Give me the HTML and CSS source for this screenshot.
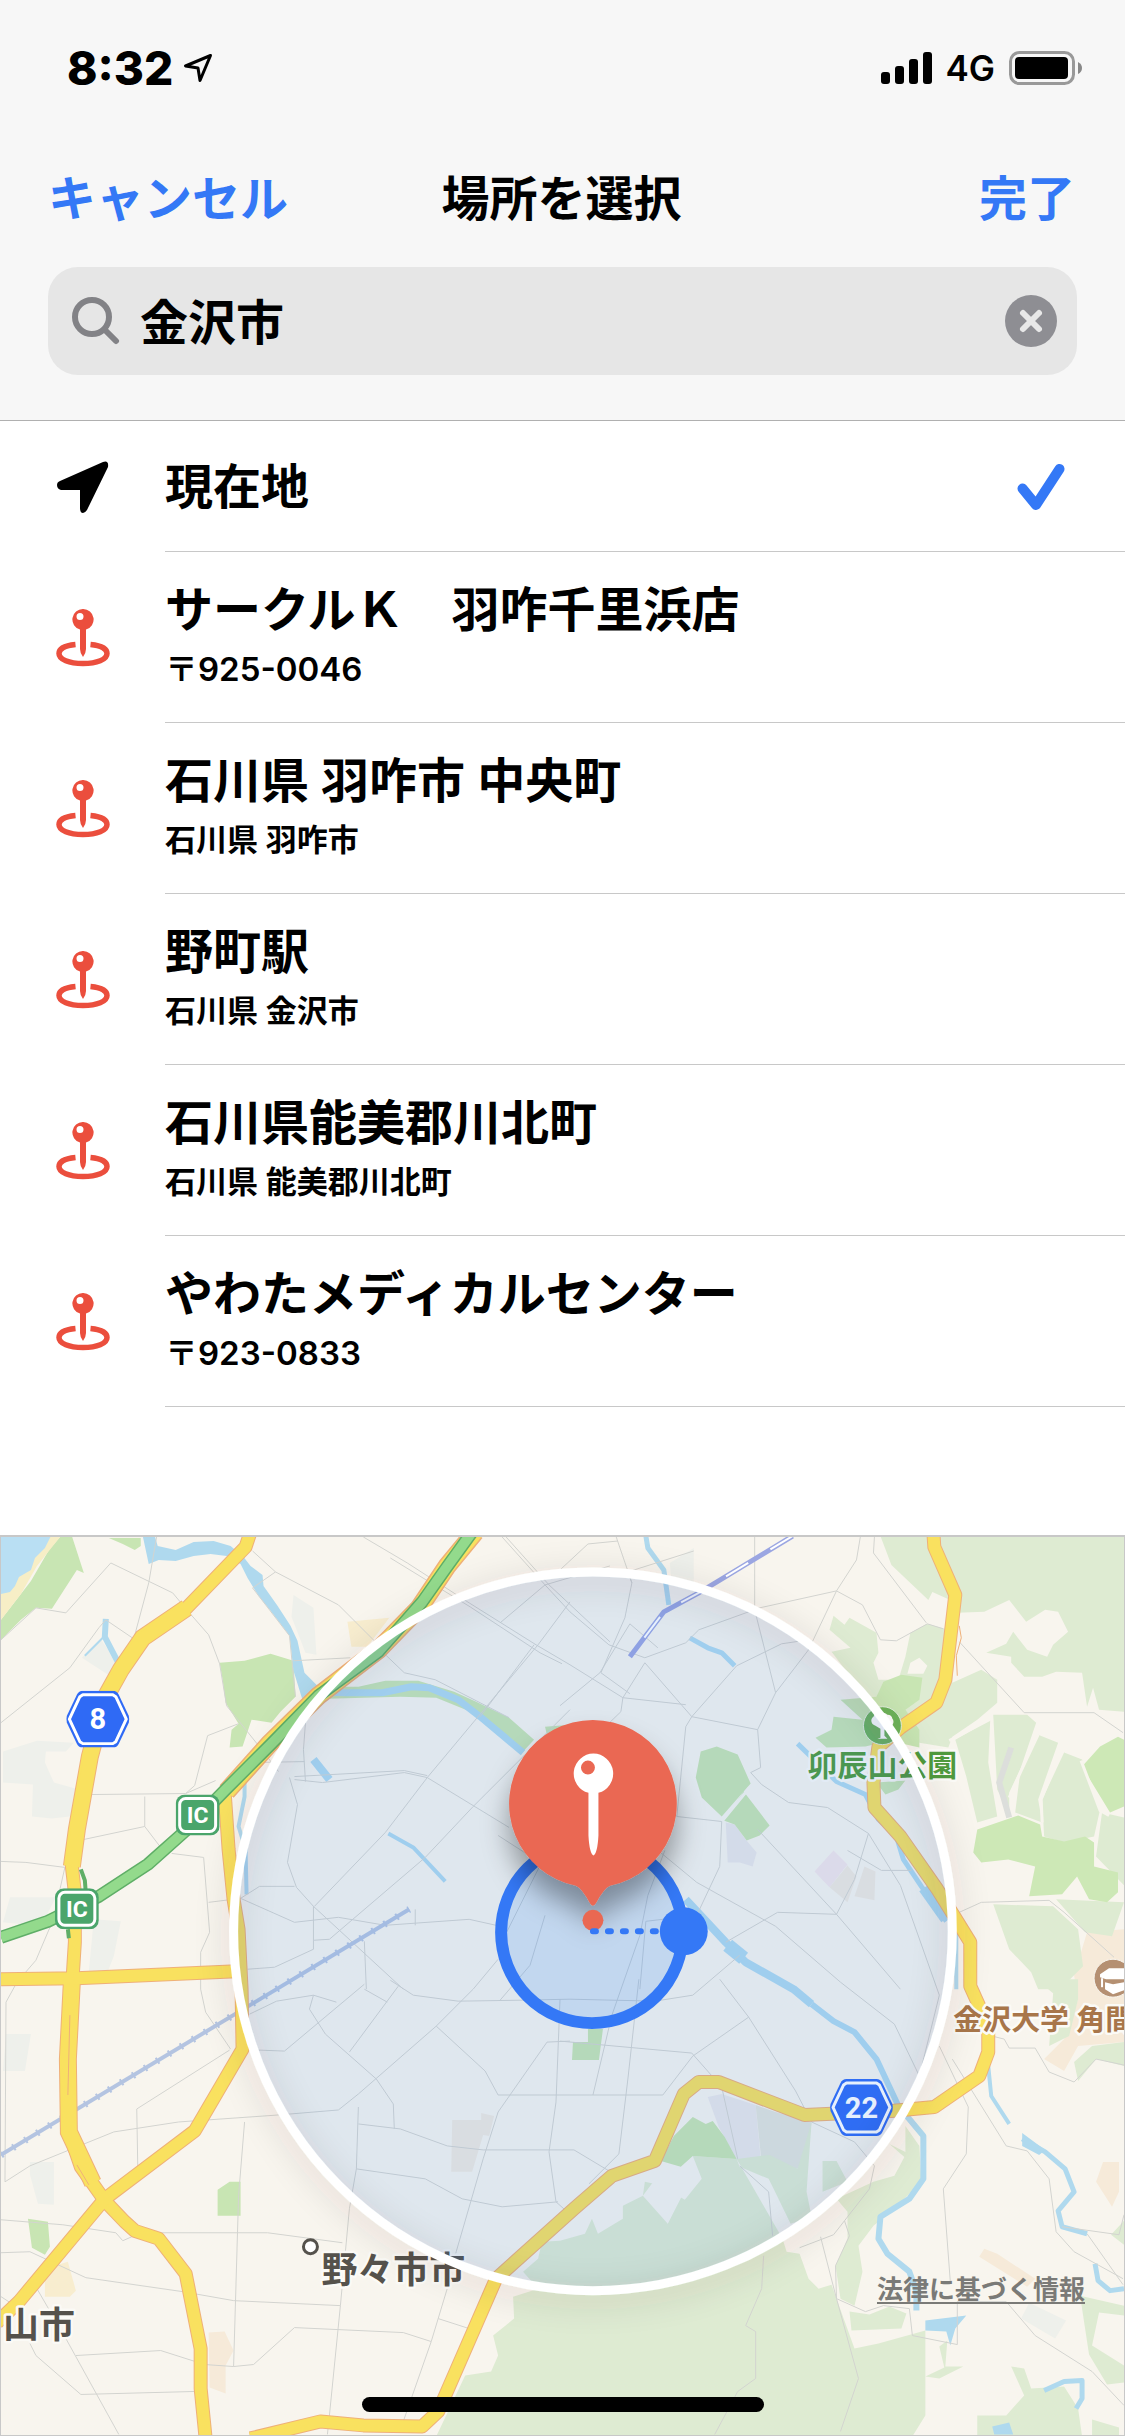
FILE: index.html
```html
<!DOCTYPE html>
<html lang="ja">
<head>
    <meta charset="UTF-8">
    <meta name="viewport" content="width=device-width, initial-scale=1.0">
    <title>場所を選択</title>
    <link rel="stylesheet" href="styles.css">
</head>
<body>
    <!-- shared icons -->
    <svg class="sprite" aria-hidden="true">
        <symbol id="pin" viewBox="0 0 54 58">
            <path fill="currentColor" fill-rule="evenodd" d="M27 0a10.500 10.500 0 0 1 3 20.600V40q0 4-3 8q-3-4-3-8V20.600A10.500 10.500 0 0 1 27 0zM24 4a3.500 3.500 0 1 0 0 7a3.500 3.500 0 0 0 0-7z"/>
            <path fill="none" stroke="currentColor" stroke-width="5.500" d="M19.500 35.500C9 36.500 3 40 3 44.500C3 50.500 13 54.500 27 54.500S51 50.500 51 44.500C51 40 45 36.500 34.500 35.500"/>
        </symbol>
        <symbol id="hexagon" viewBox="0 0 64 57">
            <path fill="#2f6af5" d="M17 0h30q4 0 6 4l10 21q1 3.500 0 7L53 53q-2 4-6 4H17q-4 0-6-4L1 32q-1-3.500 0-7L11 4q2-4 6-4z"/>
            <path fill="none" stroke="#fff" stroke-width="3" stroke-linejoin="round" d="M17 4h30l3 2l10.500 22.500L50 51l-3 2H17l-3-2L3.500 28.500L14 6z"/>
        </symbol>
        <symbol id="interchange" viewBox="0 0 44 41">
            <rect width="44" height="41" rx="9" fill="#4aa56b"/>
            <rect x="4" y="4" width="36" height="33" rx="6" fill="none" stroke="#fff" stroke-width="3"/>
        </symbol>
    </svg>

    <header class="header">
        <div class="status">
            <span class="time">8:32</span>
            <svg class="status-location" viewBox="0 0 30 30" aria-hidden="true"><path d="M27.500 2.500L2.500 13L15 15L17 27.500z" fill="none" stroke="#000" stroke-width="3" stroke-linejoin="round"/></svg>
            <svg class="signal" viewBox="0 0 52 34" aria-hidden="true">
                <rect x="0" y="21" width="9" height="12" rx="3"/>
                <rect x="14" y="15" width="9" height="18" rx="3"/>
                <rect x="28" y="8" width="9" height="25" rx="3"/>
                <rect x="42" y="1" width="9" height="32" rx="3"/>
            </svg>
            <span class="network">4G</span>
            <svg class="battery" viewBox="0 0 74 34" aria-hidden="true">
                <rect x="1.500" y="1.500" width="63" height="31" rx="9" fill="none" stroke="#999" stroke-width="3"/>
                <rect x="6" y="6" width="53" height="22" rx="4"/>
                <path d="M69 11q4 2 4 6t-4 6z" fill="#888"/>
            </svg>
        </div>
        <nav class="nav">
            <button class="nav-button" type="button">キャンセル</button>
            <h1>場所を選択</h1>
            <button class="nav-button nav-done" type="button">完了</button>
        </nav>
        <form class="search">
            <svg class="search-icon" viewBox="0 0 48 48" aria-hidden="true"><circle cx="20" cy="20" r="17"/><path d="M32.500 32.500L44 44"/></svg>
            <input type="text" name="place" value="金沢市" aria-label="場所を検索">
            <button class="clear" type="reset" aria-label="消去">
                <svg viewBox="0 0 52 52" aria-hidden="true"><circle cx="26" cy="26" r="26" fill="#8e8e93"/><path d="M18 18L34 34M34 18L18 34" stroke="#e8e8e8" stroke-width="6" stroke-linecap="round"/></svg>
            </button>
        </form>
    </header>

    <ul class="places">
        <li>
            <button class="place" type="button">
                <svg class="current-icon" viewBox="0 0 52 52" aria-hidden="true"><path d="M46 1Q52-1 51 6L30 49Q28 52 26 52Q23 52 23 47V29H4Q0 28 0 24Q0 21 3 20z"/></svg>
                <span class="place-text current">
                    <span class="name">現在地</span>
                    <svg class="check" viewBox="0 0 48 48" aria-hidden="true"><path d="M5.500 25.500L19 42L42.500 6" fill="none" stroke="#3478f6" stroke-width="10" stroke-linecap="round" stroke-linejoin="round"/></svg>
                </span>
            </button>
        </li>
        <li>
            <button class="place" type="button">
                <svg class="pin-icon" aria-hidden="true"><use href="#pin"/></svg>
                <span class="place-text"><span class="name">サークルＫ　羽咋千里浜店</span><span class="address postal">〒925-0046</span></span>
            </button>
        </li>
        <li>
            <button class="place" type="button">
                <svg class="pin-icon" aria-hidden="true"><use href="#pin"/></svg>
                <span class="place-text"><span class="name">石川県 羽咋市 中央町</span><span class="address">石川県 羽咋市</span></span>
            </button>
        </li>
        <li>
            <button class="place" type="button">
                <svg class="pin-icon" aria-hidden="true"><use href="#pin"/></svg>
                <span class="place-text"><span class="name">野町駅</span><span class="address">石川県 金沢市</span></span>
            </button>
        </li>
        <li>
            <button class="place" type="button">
                <svg class="pin-icon" aria-hidden="true"><use href="#pin"/></svg>
                <span class="place-text"><span class="name">石川県能美郡川北町</span><span class="address">石川県 能美郡川北町</span></span>
            </button>
        </li>
        <li>
            <button class="place" type="button">
                <svg class="pin-icon" aria-hidden="true"><use href="#pin"/></svg>
                <span class="place-text"><span class="name">やわたメディカルセンター</span><span class="address postal">〒923-0833</span></span>
            </button>
        </li>
    </ul>

    <main class="map">
        <svg class="map-canvas" viewBox="0 1 1125 900" preserveAspectRatio="xMidYMid slice">
            <defs>
                <filter id="ringShadow" x="-20%" y="-20%" width="140%" height="140%"><feDropShadow dx="0" dy="6" stdDeviation="16" flood-color="#3c3010" flood-opacity="0.22"/></filter>
                <filter id="pinShadow" x="-50%" y="-50%" width="200%" height="200%"><feDropShadow dx="0" dy="20" stdDeviation="14" flood-opacity="0.36"/></filter>
                <!-- roads drawn twice: casing, then fill -->
                <g id="roads" fill="none" stroke-linejoin="round">
                    <path d="M250-4L245 11L186 72L142 102L120 134L105 161L89 221L76 294L71 331L74 357L74 407L71 454" />
                    <path d="M71 440L67 524L68 597L80 632L104 666L124 687L134 696L158 704L185 739L200 814L200 854L205 904"/>
                    <path d="M224 256L228 314L233 364L238 394L241 454L242 514L194 596L104 664L18 767L-4 788"/>
                    <path d="M0 444L76 443L236 436"/>
                    <path d="M250 904L320 887L363 891L422 892L438 877L496 744L574 674L612 641L655 626L684 559L699 547L719 547L805 580L892 576L935 572L980 541L989 517L989 497L980 471L971 451L971 407L955 381L938 354L901 301L875 272L874 247L879 211L901 192L937 167L946 144L956 59L935 11L934-4"/>
                </g>
            </defs>
            <rect width="1125" height="902" fill="#f8f5ee"/>

            <!-- districts -->
            <g fill="#eef0eb">
                <path d="M293 59L313 72L316 119L305 117L291 81zM2 216L36 205L73 207L65 216L45 216L44 227L53 247L78 254L69 281L51 283L31 281L32 249L2 247zM9 362L55 362L40 391L2 387zM93 384L120 386L113 421L107 436L88 436zM5 499L30 499L24 536L2 536zM29 627L53 627L53 670L37 669L29 640zM81 122L100 104L118 128L112 142zM670 27L694 12L694 52L672 48z"/>
                <path d="M1030 768L1067 786L1056 804L1022 784z"/>
            </g>
            <g fill="#eae8e9">
                <path d="M726 287L735 289L746 304L757 317L753 331L740 327L728 327z"/>
                <path d="M708 562L722 559L756 570L762 634L737 624L719 592z"/>
            </g>
            <path fill="#e2e4dc" d="M756 570L776 577L812 587L808 620L798 634L762 628z"/>
            <path fill="#f3e6ea" d="M834 315L848 329L830 352L815 336z"/>
            <path fill="#f1eae0" d="M848 330L857 341L848 367L830 352zM865 331L876 336L875 365L855 361zM452 585L481 585L481 578L494 581L489 601L483 600L472 637L451 637z"/>
            <path fill="#f8edcf" d="M347 86L389 82L367 111L351 111zM44 734L67 727L75 756L69 762L44 762z"/>
            <path fill="#f6ead9" d="M208 798L224 797L233 816L225 831L225 859L209 853zM1088 397L1125 394V507L1079 511L1065 536L1045 524L1065 504L1079 464L1075 440zM985 714L998 719L1036 744L1028 752L980 722zM1104 627L1120 627L1120 657L1113 672L1097 647z"/>

            <!-- forest -->
            <g fill="#deebd2">
                <path d="M881 0L892 29L929 64L933 56L951 64L958 77L985 76L1010 64L1027 86L1046 74L1059 76L1069 96L1054 109L1048 121L1028 114L1014 96L1007 108L987 117L1012 121L1012 127L1025 141L1043 141L1057 136L1083 137L1088 171L1094 152L1100 174L1125 176V0z"/>
                <path d="M834 80L845 89L850 82L877 97L879 117L874 127L879 144L899 144L906 121L911 97L928 88L949 94L956 104L953 147L982 134L998 144L998 167L978 184L953 201L949 212L920 207L899 194L863 161L848 137L832 116L851 112L830 94z"/>
                <path d="M956 204L991 184L989 227L998 281L978 287L967 241zM994 179L1028 179L1037 187L1021 234L1010 257L1010 277L998 254zM1039 199L1059 207L1039 264L1043 287L1016 277L1021 237zM1065 217L1083 224L1101 274L1095 301L1065 307L1045 301L1043 264z"/>
                <path d="M1103 277L1125 282V350L1097 321zM994 369L1054 371L1079 394L1084 431L1061 454L1039 454L1032 437L1010 414zM1057 364L1125 367L1113 401L1086 397z"/>
                <path d="M1037 444L1079 444L1079 464L1070 501L1050 511L1054 458zM1125 507L1093 511L1075 527L1079 546L1097 524L1125 531z"/>
                <path d="M560 706L585 699L592 684L598 699L623 684L623 671L643 661L645 647L659 650L668 689L675 659L685 665L702 644L693 621L737 624L740 632L769 644L772 650L791 689L812 682L807 657L812 587L798 634L770 620L737 624L783 704L787 717L800 719L809 744L819 754L832 750L837 764L855 814L879 809L926 796L926 881L913 902H436L465 841L491 837L498 821L493 801L514 784L513 762L538 754L523 737L538 724L542 707z"/>
                <path d="M890 609L906 617L906 591L920 611L922 647L895 674L874 691L859 711L863 737L855 771L841 764L836 731L848 704L848 677L837 664L874 647L895 641L905 622zM823 626L837 626L848 647L823 657z"/>
                <path d="M850 777L870 780L890 772L907 779L902 794L852 796zM926 842L945 833L940 812L948 806L946 832L964 832L940 844zM1125 686L1112 700L1125 710zM1081 761L1125 771L1125 781L1100 778L1093 811L1125 831V848L1108 850L1090 820zM1012 832L1025 834L1032 854L1065 852L1079 874L1083 902H978V881L1007 881L1025 861zM1093 885L1120 893V902H1093z"/>
            </g>
            <path fill="#f8f5ee" d="M911 127L920 122L928 130L924 138L908 138zM643 661L668 689L693 640L675 626L655 645z"/>

            <!-- parks -->
            <g fill="#c8e5b3">
                <path d="M60 0H71L83 37L76 34L51 73L35 72L20 84L0 104V84L30 45L48 14zM108 2H140V10L134 14L122 8z"/>
                <path d="M345 151L358 151L385 145L418 145L454 156L476 166L509 182L534 204L523 216L502 197L473 177L436 162L400 161L327 163z"/>
                <path d="M219 127L244 125L270 118L293 125L295 161L280 176L271 187L251 184L242 211L229 212L231 194L238 188L225 167L222 144z"/>
                <path d="M27 684L47 687L49 712L44 720L31 713zM217 655L229 647L240 647L240 681L217 681zM545 191L570 189V204H548zM588 494H603L599 525H572L573 507H588z"/>
                <path d="M701 216L717 211L738 219L751 248L722 281L702 262L696 242zM744 256L770 290L760 300L747 305L735 289L724 285z"/>
                <path d="M884 146L902 139L923 142L920 164L906 174L920 194L920 212L890 205L866 211L827 212L816 202L832 194L834 181L863 184L841 164L865 162L877 161zM877 247L906 245L899 254L886 259z"/>
                <path d="M661 626L674 601L693 582L706 589L713 586L725 602L737 624L693 621L681 632z"/>
            </g>
            <path fill="#cde8b6" d="M978 294L1019 280L1041 289L1043 301L1065 306L1086 301L1095 307L1095 331L1119 337L1119 357L1108 367L1090 364L1078 341L1063 359L1030 361L1036 331L1009 324L982 327L974 317zM1125 204L1119 201L1101 211L1083 231L1111 277L1125 271z"/>
            <path fill="none" stroke="#dcdedb" stroke-width="6" d="M1012 212L1000 247L1010 282"/>
            <path fill="none" stroke="#f8f5ee" stroke-width="3" d="M950 205L992 183M1039 199L1022 235L1010 262M1063 212L1042 264L1043 287M1082 225L1101 275L1110 280M750 252L722 286"/>

            <!-- water -->
            <path fill="#f7eec6" d="M50 0H60L36 30L20 58L0 84V56z"/>
            <path fill="#b9dff3" d="M0 0H50L44 12L34 22L30 34L18 41L14 50L9 56L0 58z"/>
            <path fill="#afd9ee" d="M142 0H154L157 10L175 14L193 6L213 5L230 10L243 21L250 30L262 39L263 50L277 70L290 90L297 105L304 137L318 151L324 162L302 164L293 135L289 100L270 75L258 60L247 42L240 28L226 20L210 18L193 20L175 25L158 24L148 28z"/>
            <g fill="none" stroke="#afd9ee" stroke-linejoin="round">
                <path stroke-width="7" d="M315 156L345 157L382 157L411 151L429 152L458 164L480 181L523 217"/>
                <path stroke-width="6" d="M105 83L104 101L117 126L122 144"/>
                <path stroke-width="2" d="M102 102L84 120"/>
                <path stroke-width="4" d="M244 241V261L238 291L245 314L246 359M388 298L413 312L445 346M957 394V454M989 531L992 561L1010 589"/>
                <path stroke-width="8" d="M313 224L329 244M686 364L726 407L746 427L794 454L812 469"/>
                <path stroke-width="14" d="M728 410L744 423"/>
                <path stroke-width="5" d="M646 0L648 12L664 34L669 69M690 102L708 112L722 117L735 130M798 208L837 246L866 259L879 284L897 301L904 324L922 351L947 386"/>
                <path stroke-width="10" d="M924 353L946 384"/>
                <path stroke-width="6" d="M812 469L834 486L855 497L877 524L899 571L924 601L924 644L910 664L881 682L879 704L888 719L910 737L917 757V776"/>
                <path stroke-width="5" d="M1023 604L1046 617L1066 634L1075 657L1059 676L1063 692L1088 699M1096 729L1099 746L1111 756L1125 754M1045 856L1065 847L1083 846V864L1077 874"/>
            </g>
            <path fill="#afd9ee" d="M926 786L967 781L956 794L951 811L947 797L926 796zM1023 598L1046 615L1040 620L1023 611zM993 892L1010 888L1014 900H995z"/>

            <!-- minor streets -->
            <g fill="none" stroke="#d3d4d0" stroke-width="1">
                <path d="M0 187L69 132L98 92L105 84L133 103M0 104L35 72L65 77L110 27L172 57L187 75L208 99L219 128L226 170L262 215L278 236M156 0L148 47L133 103M252 15L275 36L338 69L375 106M275 36L252 52L289 100L295 161"/>
                <path d="M363 1L407 27L469 67L536 109L570 129L623 162L686 169M390 22L470 71L540 117L562 128M502 1L545 49L570 76L609 109M506 1L549 49L610 106"/>
                <path d="M293 125L350 122M382 116L404 137L435 144L476 165L509 182M500 87L545 49L610 30"/>
                <path d="M570 66L538 109L427 242L385 297L314 371M534 109L480 181M570 174L473 271L425 322L329 404L313 405V371L296 352L287 327L297 269L289 242M509 292L427 242L404 237L322 247L294 244M427 240L404 235L294 241"/>
                <path d="M305 187L303 214L305 246M238 188L207 200L194 250L185 258M247 227L304 226M89 259L185 258L215 245M144 261V291L160 312M83 304L144 291M0 326L25 327L64 332M64 332L52 385L35 425L16 447L5 467L4 647"/>
                <path d="M171 318L203 322L209 397L200 417V454L205 477L230 514M208 367L240 363L294 387L338 382L385 390L469 384L496 390M240 363L259 351H294M313 371L403 454M247 434L274 432L313 414V405M364 406L366 454M415 374V390M364 454L387 467"/>
                <path d="M249 479L276 466L313 460L336 467M313 460L309 474L325 499L376 544L393 569L394 594M364 449L284 516L258 515M398 451L349 517M498 424L473 454L436 491L358 559L338 575L278 580L178 587L113 597L29 631L4 647"/>
                <path d="M390 445L413 460L458 466L523 465L570 464L655 466L693 460L740 420M436 491L485 536L498 560H663L693 521L749 482M358 589L400 594L447 611L483 615H574L609 636M358 572L356 634L349 674L340 771L329 881L327 900M356 634L425 644L462 664L502 672L558 667"/>
                <path d="M560 464L556 567L549 617L556 667L566 676M570 506L547 507L498 577L483 624L456 717L447 754L431 807L403 887M0 685L62 690L115 698L122 706L140 698H267L342 708M244 587L238 661L233 832M0 718L29 717L85 743L182 757L233 766L340 771"/>
                <path d="M229 515L136 574L137 631M75 821L160 816L204 830L233 832L253 830L294 793L403 798L431 807M36 754L65 804L118 900M29 809L35 821L80 860L194 857M438 784L469 794M0 762L20 775"/>
                <path d="M755 1V74L776 157L758 194L761 232L751 237L762 249L789 267L828 272L869 298L855 344L837 379L778 377L726 407M861 0L857 24L837 55L760 72L699 94L686 107L645 122L609 109M837 55L863 69L881 104L897 105L928 88L944 93M837 55L809 114L776 157M809 104L782 108L737 130L692 181L686 191L677 281L722 286L720 331L697 380L646 386L640 454"/>
                <path d="M560 34L588 8L618 5M616 0L632 47L625 82L601 137L630 158M632 47L628 36L694 15M560 170L600 137L630 88L658 112M645 127L692 181L758 194M645 127L623 162L621 176L560 235M875 1L874 17L927 87M960 106L1025 177H1095L1124 197M960 377L982 367L1050 365L1065 377L1115 422M758 294L837 379L901 454M657 314L697 347L776 391L841 447L895 489L920 541"/>
                <path d="M869 298L901 350L940 460L920 541M848 315L882 335H912M940 511L969 572L967 619L944 654L951 747M953 524L1007 611L1028 616L1050 644L1057 697L1075 717L1124 744M989 500L1005 504L1010 513H1036L1050 537L1075 547L1097 524L1125 530M749 482L720 444M749 482L796 556L812 587L855 607L875 631L870 654L845 686L850 701L836 731L837 764L859 844L841 897"/>
                <path d="M764 721L762 754L746 791L756 797V844L738 857L715 900M821 702L837 764L866 777L884 771L910 774L913 801L958 810V767H1007L1036 801L1093 837L1125 871M740 631L769 657L773 701M800 713L834 700L845 686M560 506L692 518L722 552L738 624M639 444L628 544L619 619L589 649M1088 699L1124 750M1063 692L1120 700L1125 680"/>
                <!-- streets round the station -->
                <path d="M593 560L612 480L640 400L648 360L665 315M505 400L530 350L560 290M500 465L530 430L545 380M498 300L560 340"/>
            </g>
            <!-- railways -->
            <path fill="none" stroke="#b4c4e1" stroke-width="4" d="M0 620L409 374"/>
            <path fill="none" stroke="#b4c4e1" stroke-width="7" stroke-dasharray="2 12" d="M0 620L409 374"/>
            <path fill="none" stroke="#9ba6e2" stroke-width="5" d="M793 0L699 57L664 76L630 121"/>
            <path fill="none" stroke="#fff" stroke-width="2" stroke-dasharray="26 26" d="M793 0L699 57L664 76L630 121"/>

            <!-- main roads -->
            <use href="#roads" stroke="#efb078" stroke-width="14"/>
            <path fill="none" stroke="#efb078" stroke-width="18" d="M71 446L67 524L68 597L92 648M186 72L142 102L120 134L105 161L89 221L76 294L71 331"/>
            <path fill="none" stroke="#efb078" stroke-width="19" d="M475-4L447 30L419 72L378 114L318 160L269 208L226 256"/>
            <path fill="none" stroke="#f9e15f" stroke-width="16" d="M71 446L67 524L68 597L92 648M186 72L142 102L120 134L105 161L89 221L76 294L71 331M475-4L447 30L419 72L378 114L318 160L269 208L226 256"/>
            <use href="#roads" stroke="#f9e15f" stroke-width="12"/>
            <path fill="none" stroke="#efb078" stroke-width="1" d="M69 480L67 560M76 630L88 650M960 90L962 102L957 120L958 140"/>
            <g fill="none" stroke-linejoin="round">
                <path stroke="#5fae67" stroke-width="13" d="M472-4L446 32L422 66L378 116L318 160L271 208L225 254L184 296L147 329L98 361L47 386L0 402"/>
                <path stroke="#93da8c" stroke-width="10" d="M472-4L446 32L422 66L378 116L318 160L271 208L225 254L184 296L147 329L98 361L47 386L0 402"/>
                <path stroke="#5fae67" stroke-width="4" d="M80 334L84 345L85 358M67 394L68 403"/>
            </g>

            <!-- road shields -->
            <use href="#hexagon" x="65" y="155" width="64" height="57"/>
            <use href="#hexagon" x="830" y="544" width="64" height="57"/>
            <use href="#interchange" x="175" y="259" width="44" height="41"/>
            <use href="#interchange" x="54" y="353" width="44" height="41"/>
            <g class="shield-text">
                <text x="97" y="193">8</text>
                <text x="862" y="583">22</text>
            </g>
            <g class="ic-text">
                <text x="197" y="288">IC</text>
                <text x="76" y="382">IC</text>
            </g>

            <!-- places -->
            <circle cx="883" cy="190" r="19" fill="#6db35a" stroke="#e5f0df"/>
            <path fill="#fff" d="M881 202V193L876 190A5 5 0 0 1 874 181A5 5 0 0 1 880 178A6 6 0 0 1 888 179A5 5 0 0 1 893 183A5 5 0 0 1 890 191L885 194V200L888 203H878z"/>
            <circle cx="1114" cy="443" r="19" fill="#b59072" stroke="#f8f5ee"/>
            <path fill="none" stroke="#fff" stroke-width="2" stroke-linejoin="round" d="M1103 443V452"/>
            <path fill="#fff" d="M1101 439L1110 433H1125V444H1107L1101 442zM1106 447L1114 449L1125 447V455L1114 459L1106 454z"/>
            <circle cx="310" cy="712" r="7" fill="#fff" stroke="#55524c" stroke-width="3"/>
            <g class="map-label">
                <text class="park" x="808" y="240">卯辰山公園</text>
                <text class="school" x="954" y="495">金沢大学 角間</text>
                <text class="city" x="321" y="748">野々市市</text>
                <text class="city" x="2" y="803">山市</text>
            </g>

            <!-- search range -->
            <circle cx="593" cy="396" r="360" fill="#3082ee" fill-opacity="0.12"/>
            <circle cx="593" cy="396" r="360" fill="none" stroke="#fff" stroke-width="9" filter="url(#ringShadow)"/>
            <circle cx="592" cy="397" r="91" fill="#358af4" fill-opacity="0.17" stroke="#3478f6" stroke-width="12"/>
            <g fill="#ea6852">
                <path filter="url(#pinShadow)" d="M576 350.500A84 84 0 1 1 610 350.500Q604 353 596 368Q593 373 590 368Q582 353 576 350.500z"/>
                <circle cx="593" cy="385" r="10.500"/>
            </g>
            <path fill="#fff" fill-rule="evenodd" d="M593.500 218a20 20 0 0 1 5 39.300V300q-1 18-5 20q-4-2-5-20V257.300A20 20 0 0 1 593.500 218zM588 225a7 7 0 1 0 0 14a7 7 0 0 0 0-14z"/>
            <path stroke="#3478f6" stroke-width="6" stroke-linecap="round" stroke-dasharray="3 12" d="M593 396H664"/>
            <circle cx="684" cy="396" r="24" fill="#3478f6"/>
        </svg>
        <a class="legal" href="#legal">法律に基づく情報</a>
        <div class="home-indicator"></div>
    </main>
</body>
</html>
```
FILE: styles.css
```css
* {
    box-sizing: border-box;
}

body {
    margin: 0;
    min-height: 100vh;
    display: flex;
    flex-direction: column;
    background: #fff;
    color: #000;
    font-family: Inter, "Noto Sans CJK JP", sans-serif;
    font-size: 48px;
    font-weight: 600;
}

button,
input {
    margin: 0;
    padding: 0;
    border: none;
    background: none;
    color: inherit;
    font: inherit;
}

.sprite {
    position: absolute;
    width: 0;
    height: 0;
}

.header {
    background: #f7f7f7;
    border-bottom: 1px solid #b0b0b0;
}

.status {
    display: flex;
    align-items: center;
    height: 136px;
    padding: 0 42px 0 67px;
}

.time {
    font-size: 46px;
    font-weight: 800;
}

.status-location {
    width: 30px;
    height: 30px;
    margin-left: 10px;
}

.signal {
    width: 52px;
    height: 34px;
    margin-left: auto;
}

.network {
    margin: 0 14px 0 12px;
    font-size: 35px;
}

.battery {
    width: 74px;
    height: 34px;
}

.nav {
    display: grid;
    grid-template-columns: 1fr auto 1fr;
    align-items: center;
    height: 118px;
    padding: 0 50px 0 48px;
}

.nav h1 {
    margin: 0;
    font-size: 48px;
    font-weight: 700;
}

.nav-button {
    color: #3478f6;
    justify-self: start;
}

.nav-done {
    justify-self: end;
}

.search {
    display: flex;
    align-items: center;
    height: 108px;
    margin: 13px 48px 45px;
    padding: 0 20px 0 24px;
    border-radius: 30px;
    background: #e6e6e6;
}

.search-icon {
    width: 48px;
    height: 48px;
    fill: none;
    stroke: #828286;
    stroke-width: 6;
    stroke-linecap: round;
}

.search input {
    flex: 1;
    min-width: 0;
    margin: 0 20px;
    padding-bottom: 4px;
    outline: none;
}

.clear {
    width: 52px;
    height: 52px;
}

.clear svg {
    display: block;
}

.places {
    margin: 0;
    padding: 0 0 128px;
    list-style: none;
}

.place {
    display: grid;
    grid-template-columns: 165px 1fr;
    align-items: center;
    width: 100%;
    text-align: left;
}

.place > svg {
    justify-self: center;
}

.current-icon {
    width: 52px;
    height: 52px;
}

.pin-icon {
    width: 54px;
    height: 58px;
    color: #eb4e3d;
}

.place-text {
    display: flex;
    flex-direction: column;
    padding: 26px 0;
    border-bottom: 1px solid #c8c8c8;
}

.place-text.current {
    flex-direction: row;
    align-items: center;
    justify-content: space-between;
    padding: 34px 60px 32px 0;
}

.check {
    width: 48px;
    height: 48px;
}

.name {
    line-height: 64px;
}

.address {
    font-size: 31px;
    line-height: 54px;
}

.postal {
    font-size: 33px;
}

.map {
    position: relative;
    flex: 1;
    display: flex;
    border: 1px solid #c8c8c8;
    border-top-width: 2px;
    overflow: hidden;
}

.map-canvas {
    flex: 1;
    width: 100%;
    min-height: 0;
}

.shield-text,
.ic-text {
    fill: #fff;
    font-family: Roboto, sans-serif;
    font-weight: 700;
    text-anchor: middle;
}

.shield-text {
    font-size: 29px;
}

.ic-text {
    font-size: 23px;
}

.map-label {
    stroke: #fbfaf6;
    stroke-width: 5;
    stroke-linejoin: round;
    paint-order: stroke;
}

.park {
    fill: #4f9a3c;
    font-size: 30px;
}

.school {
    fill: #a8764a;
    font-size: 29px;
}

.city {
    fill: #55524c;
    font-size: 36px;
}

.legal {
    position: absolute;
    right: 39px;
    bottom: 126px;
    color: #7a7a77;
    font-size: 26px;
    line-height: 38px;
    text-underline-offset: 3px;
}

.home-indicator {
    position: absolute;
    left: 50%;
    bottom: 23px;
    width: 402px;
    height: 15px;
    border-radius: 8px;
    background: #000;
    transform: translateX(-50%);
}
```
